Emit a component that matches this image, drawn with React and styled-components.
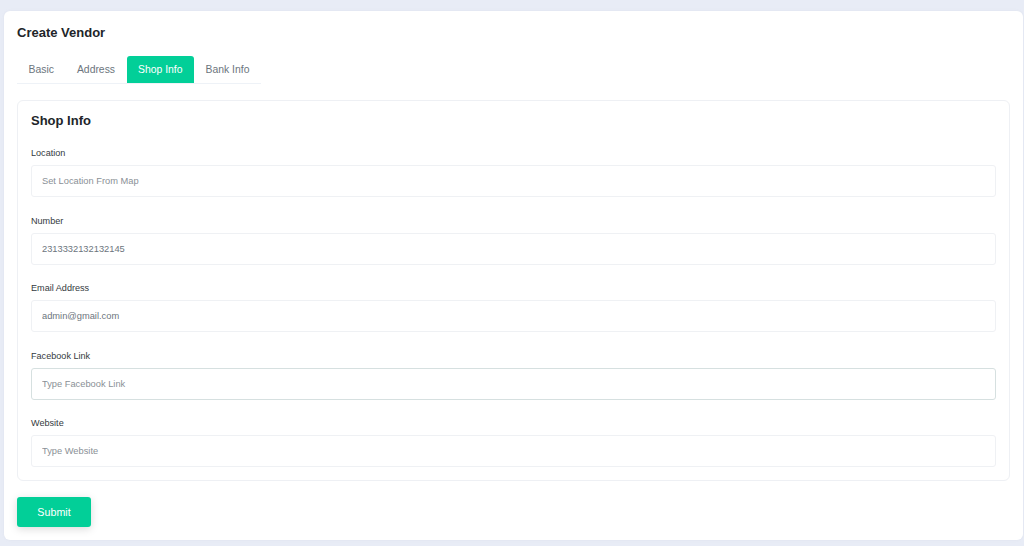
import React from 'react';
import styled, { createGlobalStyle } from 'styled-components';

const GlobalStyle = createGlobalStyle`
  * { box-sizing: border-box; }
  body {
    margin: 0;
    background: #e8ecf6;
    font-family: 'Liberation Sans', Arial, sans-serif;
  }
`;

const Page = styled.div`
  padding: 11px 1px 6px 4px;
  min-height: 546px;
`;

const Card = styled.div`
  background: #fff;
  border-radius: 6px;
  padding: 13px;
  box-shadow: 0 0 3px rgba(154, 161, 171, 0.1);
`;

const Title = styled.h1`
  margin: 0 0 15px;
  font-size: 13px;
  line-height: 17px;
  font-weight: 700;
  color: #212529;
`;

const TabList = styled.div`
  display: flex;
  width: fit-content;
  border-bottom: 1px solid #eef2f7;
  margin-bottom: 16px;
`;

const Tab = styled.button`
  height: 27px;
  padding: 0 11.5px;
  border: none;
  border-radius: 3px 3px 0 0;
  background: ${(p) => (p.$active ? '#02cf98' : 'transparent')};
  color: ${(p) => (p.$active ? '#fff' : '#6c757d')};
  font-family: inherit;
  font-size: 10.4px;
  cursor: pointer;
`;

const Panel = styled.div`
  border: 1px solid #eef0f4;
  border-radius: 6px;
  padding: 13px;
`;

const PanelTitle = styled.h2`
  margin: 0 0 19px;
  font-size: 13px;
  line-height: 14px;
  font-weight: 700;
  color: #212529;
`;

const Field = styled.div`
  margin-bottom: 17.5px;
  &:last-child { margin-bottom: 0; }
`;

const Label = styled.label`
  display: block;
  font-size: 9.1px;
  line-height: 12px;
  color: #343a40;
  margin-bottom: 6px;
`;

const Input = styled.input`
  display: block;
  width: 100%;
  height: 32px;
  padding: 0 10px;
  border: 1px solid ${(p) => (p.$focused ? '#d6e0e0' : '#eff1f4')};
  border-radius: 3px;
  background: #fff;
  font-family: inherit;
  font-size: 9.3px;
  color: #6c757d;
  outline: none;

  &::placeholder { color: #8a9096; }
`;

const SubmitButton = styled.button`
  margin-top: 16px;
  width: 74px;
  height: 30px;
  border: none;
  border-radius: 3px;
  background: #02cf98;
  color: #fff;
  font-family: inherit;
  font-size: 10.7px;
  box-shadow: 0 2px 8px rgba(0, 0, 0, 0.15);
  cursor: pointer;
`;

const tabs = ['Basic', 'Address', 'Shop Info', 'Bank Info'];

const fields = [
  { label: 'Location', placeholder: 'Set Location From Map' },
  { label: 'Number', value: '2313332132132145' },
  { label: 'Email Address', value: 'admin@gmail.com' },
  { label: 'Facebook Link', placeholder: 'Type Facebook Link', focused: true },
  { label: 'Website', placeholder: 'Type Website' },
];

export default function App() {
  return (
    <>
      <GlobalStyle />
      <Page>
        <Card>
          <Title>Create Vendor</Title>
          <TabList>
            {tabs.map((t) => (
              <Tab key={t} $active={t === 'Shop Info'}>{t}</Tab>
            ))}
          </TabList>
          <Panel>
            <PanelTitle>Shop Info</PanelTitle>
            {fields.map((f) => (
              <Field key={f.label}>
                <Label>{f.label}</Label>
                <Input
                  placeholder={f.placeholder}
                  defaultValue={f.value}
                  $focused={f.focused}
                />
              </Field>
            ))}
          </Panel>
          <SubmitButton>Submit</SubmitButton>
        </Card>
      </Page>
    </>
  );
}
